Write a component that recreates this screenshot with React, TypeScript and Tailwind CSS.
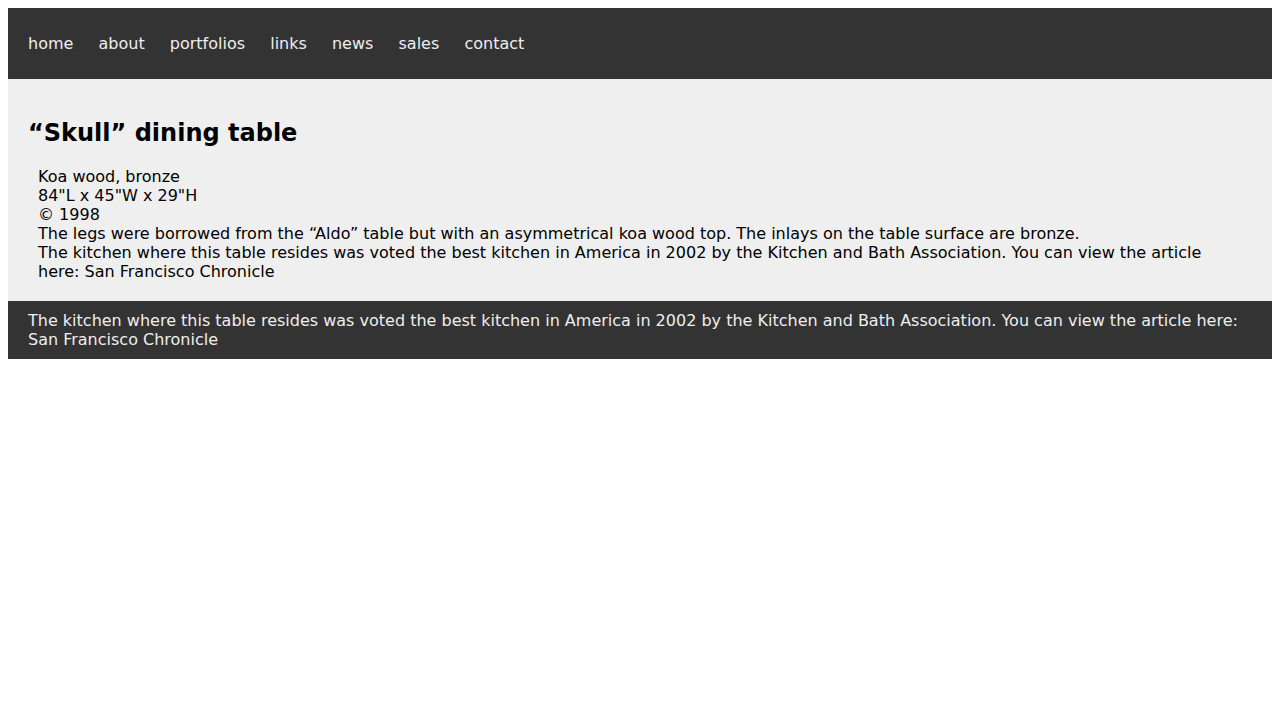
import React from 'react';

const links = ['home', 'about', 'portfolios', 'links', 'news', 'sales', 'contact'];

const App: React.FC = () => {
  return (
    <div className="p-2 bg-white min-h-[720px] font-['DejaVu_Sans',sans-serif] text-base leading-[19px]">
      {/* Header */}
      <header className="bg-[#333333] h-[71px] px-5 flex items-center">
        <nav className="flex gap-[25.15px] text-[#eeeeee]">
          {links.map((l) => (
            <a key={l} href="#" className="text-[#eeeeee]">
              {l}
            </a>
          ))}
        </nav>
      </header>

      {/* Main content */}
      <main className="bg-[#efefef] p-5">
        <h2 className="text-2xl leading-[28px] font-bold text-black my-5">“Skull” dining table</h2>
        <div className="mx-[10px] text-black">
          <p>Koa wood, bronze</p>
          <p>84"L x 45"W x 29"H</p>
          <p>© 1998</p>
          <p>The legs were borrowed from the “Aldo” table but with an asymmetrical koa wood top. The inlays on the table surface are bronze.</p>
          <p>
            The kitchen where this table resides was voted the best kitchen in America in 2002 by the Kitchen and Bath Association. You can view the article here: San Francisco Chronicle
          </p>
        </div>
      </main>

      {/* Footer */}
      <footer className="bg-[#333333] px-5 py-[10px] text-[#eeeeee]">
        The kitchen where this table resides was voted the best kitchen in America in 2002 by the Kitchen and Bath Association. You can view the article here: San Francisco Chronicle
      </footer>
    </div>
  );
};

export default App;
